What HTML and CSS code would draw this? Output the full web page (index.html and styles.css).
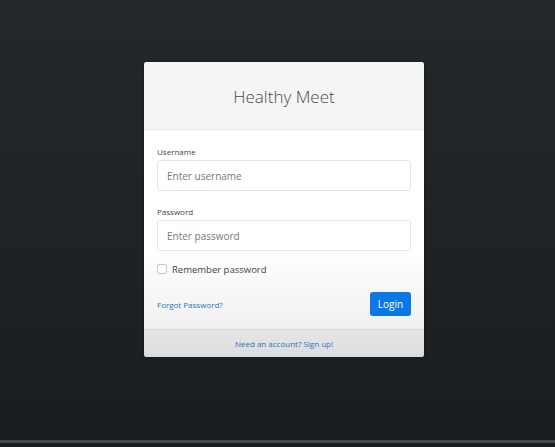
FILE: index.html
```html
<!DOCTYPE html>
<html>
<head>
<meta charset="utf-8">
<link rel="stylesheet" href="styles.css">
</head>
<body>
<div class="page">
  <div class="card">
    <div class="card-header">Healthy Meet</div>
    <div class="card-body">
      <label class="label">Username</label>
      <div class="input">Enter username</div>
      <label class="label">Password</label>
      <div class="input last">Enter password</div>
      <div class="check-row">
        <span class="checkbox"></span>
        <span class="check-text">Remember password</span>
      </div>
      <div class="actions">
        <a class="link">Forgot Password?</a>
        <span class="btn">Login</span>
      </div>
    </div>
    <div class="card-footer"><a class="link">Need an account? Sign up!</a></div>
  </div>
  <div class="spacer"></div>
  <div class="bar"></div>
</div>
</body>
</html>
```
FILE: styles.css
```css
html, body { margin: 0; padding: 0; }
body {
  width: 555px;
  height: 447px;
  overflow: hidden;
  font-family: "Open Sans", "Noto Sans", sans-serif;
  background: linear-gradient(#22272a 0%, #1f2326 50%, #1a1d20 100%);
}
.page {
  height: 447px;
  display: flex;
  flex-direction: column;
  padding: 62px 0 0 144px;
  box-sizing: border-box;
}
.card {
  width: 280px;
  border-radius: 3px;
  overflow: hidden;
  background: #fff;
  box-shadow: 0 0 3px rgba(0,0,0,0.4);
}
.card-header {
  height: 68px;
  background: #f5f5f5;
  border-bottom: 1px solid #e8e8e8;
  box-sizing: border-box;
  display: flex;
  align-items: center;
  justify-content: center;
  font-size: 17px;
  font-weight: 300;
  color: #4a4a4a;
  padding-top: 2px;
}
.card-body {
  padding: 16px 13px 13px 13px;
  display: flex;
  flex-direction: column;
  background: linear-gradient(#ffffff 0%, #ffffff 60%, #f0f0f0 100%);
}
.label {
  font-size: 8px;
  color: #444;
  line-height: 11px;
  margin-bottom: 3px;
}
.input {
  height: 31px;
  border: 1px solid #e4e4e4;
  border-radius: 3px;
  box-sizing: border-box;
  display: flex;
  align-items: center;
  padding-left: 9px;
  font-size: 10px;
  color: #777;
  background: #fff;
  margin-bottom: 15px;
}
.input.last { margin-bottom: 10px; }
.check-row {
  display: flex;
  align-items: center;
  gap: 5px;
  height: 16px;
}
.checkbox {
  width: 8px;
  height: 8px;
  border: 1px solid #c8c8c8;
  border-radius: 2px;
  background: #fff;
}
.check-text {
  font-size: 9.5px;
  color: #444;
}
.actions {
  display: flex;
  justify-content: space-between;
  align-items: center;
  margin-top: 15px;
}
.link {
  color: #2a72c8;
  font-size: 8px;
}
.btn {
  width: 41px;
  height: 24px;
  border-radius: 3px;
  background: #0b78e3;
  color: #fff;
  font-size: 10px;
  display: flex;
  align-items: center;
  justify-content: center;
}
.card-footer {
  height: 28px;
  background: linear-gradient(#e6e6e6, #dcdcdc);
  border-top: 1px solid #d8d8d8;
  box-sizing: border-box;
  display: flex;
  align-items: center;
  justify-content: center;
}
.spacer { flex: 1; }
.bar {
  height: 3px;
  background: #47494c;
  margin-left: -144px;
  margin-bottom: 4px;
}
```
